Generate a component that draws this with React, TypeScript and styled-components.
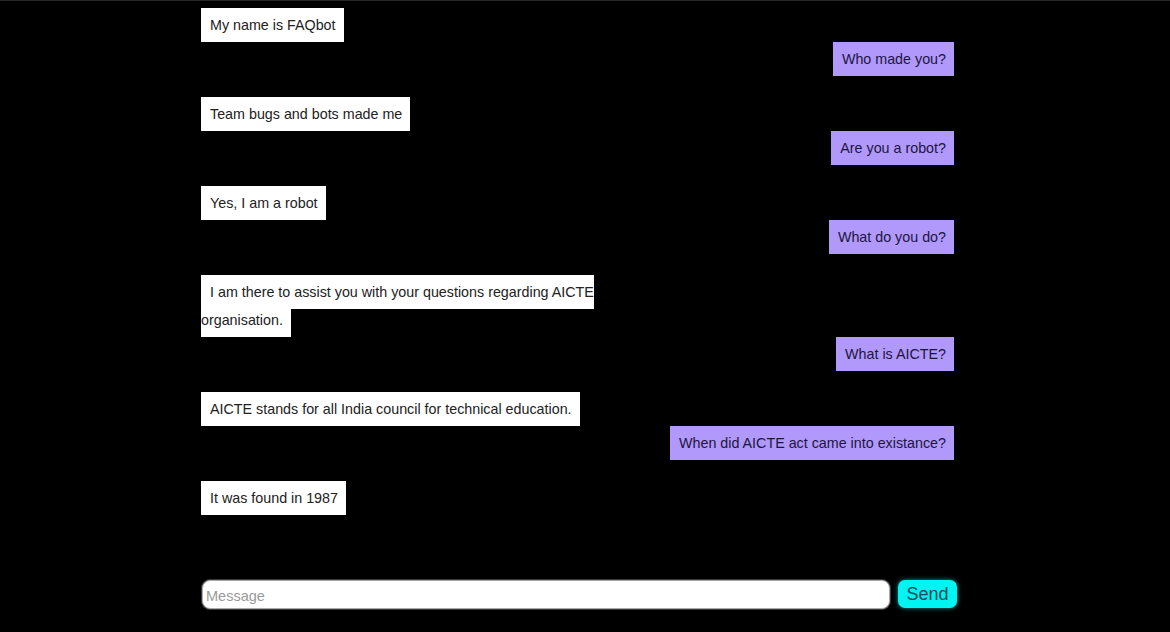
import React, { useState } from "react";
import styled, { createGlobalStyle } from "styled-components";

const GlobalStyle = createGlobalStyle`
  html, body {
    margin: 0;
    padding: 0;
    background: #000;
  }
  * {
    box-sizing: border-box;
  }
`;

const Page = styled.div`
  display: flex;
  flex-direction: column;
  align-items: center;
  height: 100vh;
  padding-right: 15px;
  border-top: 1px solid #262626;
  background: #000;
  font-family: "Liberation Sans", Arial, sans-serif;
  overflow: hidden;
`;

const ChatLog = styled.div`
  flex: 1;
  width: 753px;
  padding-top: 10px;
  overflow: hidden;
`;

const Row = styled.div<{ $mine?: boolean }>`
  text-align: ${(p) => (p.$mine ? "right" : "left")};
  line-height: 28px;
  font-size: 14.3px;
  margin-bottom: ${(p) => (p.$mine ? "27px" : "6px")};
`;

const Bubble = styled.span<{ $mine?: boolean }>`
  display: inline;
  padding: 9px 8px 9px 9px;
  background: ${(p) => (p.$mine ? "#b199fb" : "#ffffff")};
  color: ${(p) => (p.$mine ? "#1c1540" : "#222222")};
`;

const BotRow = styled(Row)`
  max-width: 420px;
`;

const Compose = styled.form`
  display: flex;
  align-items: flex-start;
  gap: 8px;
  width: 755px;
  margin-left: 4px;
  padding-bottom: 23px;
`;

const MessageInput = styled.input`
  flex: 1;
  height: 29px;
  padding: 2px 3px 0;
  border: 1.5px solid #a8a8a8;
  border-radius: 8px;
  box-shadow: 0 0 0 1px #3a3a3a;
  background: #fff;
  font-family: "Liberation Sans", Arial, sans-serif;
  font-size: 14.5px;
  color: #222;
  outline: none;

  &::placeholder {
    color: #9a9a9a;
  }
`;

const SendButton = styled.button`
  width: 59px;
  height: 28px;
  padding: 0;
  border: none;
  border-radius: 7px;
  background: #00f5f2;
  box-shadow: 0 0 5px rgba(0, 255, 255, 0.55);
  color: #0b4c58;
  font-family: "Liberation Sans", Arial, sans-serif;
  font-size: 18px;
  cursor: pointer;
`;

type Message = { from: "bot" | "user"; text: string };

const history: Message[] = [
  { from: "bot", text: "My name is FAQbot" },
  { from: "user", text: "Who made you?" },
  { from: "bot", text: "Team bugs and bots made me" },
  { from: "user", text: "Are you a robot?" },
  { from: "bot", text: "Yes, I am a robot" },
  { from: "user", text: "What do you do?" },
  { from: "bot", text: "I am there to assist you with your questions regarding AICTE organisation." },
  { from: "user", text: "What is AICTE?" },
  { from: "bot", text: "AICTE stands for all India council for technical education." },
  { from: "user", text: "When did AICTE act came into existance?" },
  { from: "bot", text: "It was found in 1987" },
];

export default function App() {
  const [draft, setDraft] = useState("");

  return (
    <>
      <GlobalStyle />
      <Page>
        <ChatLog>
          {history.map((m, i) =>
            m.from === "user" ? (
              <Row key={i} $mine>
                <Bubble $mine>{m.text}</Bubble>
              </Row>
            ) : (
              <BotRow key={i}>
                <Bubble>{m.text}</Bubble>
              </BotRow>
            )
          )}
        </ChatLog>
        <Compose onSubmit={(e) => e.preventDefault()}>
          <MessageInput
            placeholder="Message"
            value={draft}
            onChange={(e) => setDraft(e.target.value)}
          />
          <SendButton type="submit">Send</SendButton>
        </Compose>
      </Page>
    </>
  );
}
